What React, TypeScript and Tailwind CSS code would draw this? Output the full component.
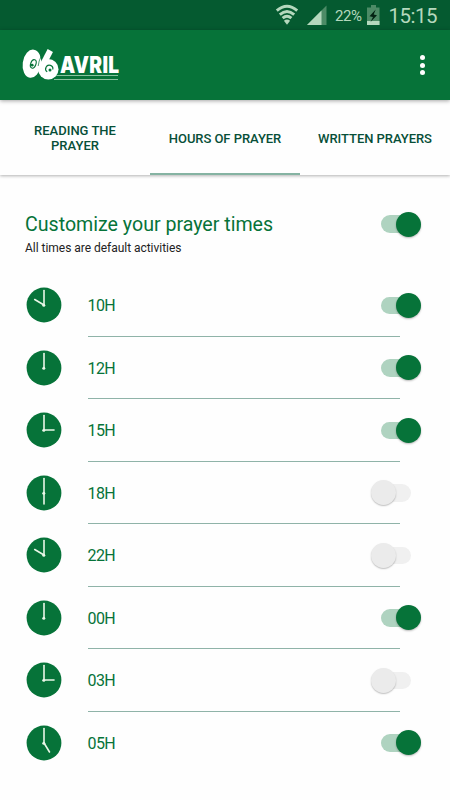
import React from "react";

type Prayer = { label: string; on: boolean; hand: [number, number] | null };

const prayers: Prayer[] = [
  { label: "10H", on: true, hand: [8.7, 12.5] },
  { label: "12H", on: true, hand: null },
  { label: "15H", on: true, hand: [28, 18] },
  { label: "18H", on: false, hand: [18, 29] },
  { label: "22H", on: false, hand: [8.7, 12.5] },
  { label: "00H", on: true, hand: null },
  { label: "03H", on: false, hand: [28, 18] },
  { label: "05H", on: true, hand: [23.5, 27] },
];

function Clock({ hand }: { hand: Prayer["hand"] }) {
  return (
    <svg className="size-9 shrink-0" viewBox="0 0 36 36">
      <circle cx="18" cy="18" r="17.4" fill="#067339" />
      <g stroke="#e9f7e8" strokeWidth="1.6" strokeLinecap="round">
        <line x1="18" y1="18" x2="18" y2="3.5" />
        {hand && <line x1="18" y1="18" x2={hand[0]} y2={hand[1]} />}
      </g>
      <circle cx="17.8" cy="18.2" r="1.5" fill="#e9f7e8" />
    </svg>
  );
}

function Toggle({ on }: { on: boolean }) {
  return on ? (
    <button className="flex h-[25px] w-[51px] items-center pl-[11px]" aria-pressed="true">
      <span className="h-[17.5px] w-[30px] shrink-0 rounded-full bg-[#afd3c0]" />
      <span className="-ml-[15.5px] size-[25px] shrink-0 rounded-full bg-[#067339] shadow-[0_1px_2px_rgba(0,0,0,0.28)]" />
    </button>
  ) : (
    <button className="flex h-[25px] w-[51px] items-center pl-[0.5px]" aria-pressed="false">
      <span className="z-1 size-[25px] shrink-0 rounded-full bg-[#ebebeb] shadow-[0_1px_1.5px_rgba(0,0,0,0.25)]" />
      <span className="-ml-[14.5px] h-[17.5px] w-[30px] shrink-0 rounded-full bg-[#f0f0f0]" />
    </button>
  );
}

function Logo() {
  return (
    <div className="flex items-center">
      <svg className="h-12 w-[40px] shrink-0 overflow-visible" viewBox="20 41 40 48">
        <g fill="#fff">
          <ellipse cx="31.9" cy="63.7" rx="9.2" ry="14.2" transform="rotate(8 31.9 63.7)" />
          <circle cx="48.3" cy="69.2" r="10.2" />
          <line x1="42.8" y1="65" x2="50.3" y2="50.5" stroke="#fff" strokeWidth="6" />
        </g>
        <path d="M41.3 56Q38.6 61 38.2 66" fill="none" stroke="#067339" strokeWidth="0.7" />
        <ellipse cx="33.3" cy="63.9" rx="2.6" ry="4.4" transform="rotate(20 33.3 63.9)" fill="none" stroke="#067339" strokeWidth="1.1" />
        <circle cx="32.2" cy="65.2" r="1.4" fill="#067339" />
        <path d="M47.2 71.8A3.6 3.6 0 1 1 52.8 69.5" fill="none" stroke="#067339" strokeWidth="1.2" />
        <circle cx="50" cy="70" r="1.5" fill="#067339" />
        <path d="M56 75.5H118M54 79.5H118" stroke="#8ac29f" strokeWidth="1" />
      </svg>
      <span className="w-[64px] origin-left scale-x-[0.853] whitespace-nowrap font-[Inter,sans-serif] text-[22.5px] font-black leading-7 tracking-[0.3px] text-white">
        AVRIL
      </span>
    </div>
  );
}

function StatusBar() {
  return (
    <div className="flex h-[30px] items-center justify-end bg-[#055a30] pr-[12px] text-[#b5d8bd]">
      <svg className="h-[30px] w-[54px]" viewBox="274 0 54 30">
        <g fill="none" stroke="#b5d8bd" strokeWidth="2.9">
          <path d="M276.8 10.7Q287 1.8 297.2 10.7" />
          <path d="M279.8 14.6Q287 8.3 294.2 14.6" />
          <path d="M282.6 18.2Q287 14.3 291.4 18.2" />
        </g>
        <path d="M283.9 20.8Q287 18.3 290.1 20.8L287 24.8Z" fill="#b5d8bd" />
        <path d="M307 25L326.5 5.5V25Z" fill="#4d8b66" />
        <path d="M307 25L321.5 10.5V25Z" fill="#b5d8bd" />
      </svg>
      <span className="ml-[7px] w-[29px] whitespace-nowrap pt-[3px] text-[15px] tracking-[-0.4px]">22%</span>
      <svg className="ml-[3px] h-[30px] w-[13px]" viewBox="367 0 13 30">
        <path d="M371 5h5v2.5h3.5V25H367V7.5h4Z" fill="#4d8b66" />
        <path d="M367 21h12.5v4H367Z" fill="#b5d8bd" />
        <path d="M375.7 9.5L369.5 16.3L373 17L370.5 22L377 15.2L373.7 14.4Z" fill="#032313" />
      </svg>
      <span className="ml-[8.5px] w-[49.5px] whitespace-nowrap pt-[2px] text-[20.5px] tracking-[-0.5px]">15:15</span>
    </div>
  );
}

export default function App() {
  return (
    <div className="h-[800px] w-[450px] overflow-hidden bg-[#fefefe] font-[Roboto,sans-serif]">
      <StatusBar />
      <header className="relative z-20 flex h-[70px] items-center justify-between bg-[#067339] pl-5 pr-[25px] shadow-[0_1px_4px_rgba(0,0,0,0.35)]">
        <Logo />
        <button className="flex flex-col gap-[2.5px]" aria-label="More">
          <span className="size-[5px] rounded-full bg-white" />
          <span className="size-[5px] rounded-full bg-white" />
          <span className="size-[5px] rounded-full bg-white" />
        </button>
      </header>
      <nav className="relative z-10 grid h-[75px] grid-cols-3 bg-[#fefefe] text-center text-[13px] font-medium leading-[15px] text-[#074f38] shadow-[0_1px_3px_rgba(0,0,0,0.3)]">
        <button className="flex items-center justify-center px-6 pt-[1px]">READING THE PRAYER</button>
        <button className="flex items-center justify-center whitespace-nowrap border-b-[2.5px] border-[#85b3a2] pt-[4px] tracking-[-0.05px]">
          HOURS OF PRAYER
        </button>
        <button className="flex items-center justify-center whitespace-nowrap pt-[1px] tracking-[-0.05px]">WRITTEN PRAYERS</button>
      </nav>
      <main className="pt-9">
        <section className="flex h-[63px] justify-between pl-[25px] pr-[29px]">
          <div>
            <h1 className="whitespace-nowrap text-[19.6px] leading-7 text-[#067339]">Customize your prayer times</h1>
            <p className="text-[12px] leading-[18px] tracking-[-0.03px] text-[#222]">All times are default activities</p>
          </div>
          <div className="pt-[0.5px]">
            <Toggle on />
          </div>
        </section>
        <ul>
          {prayers.map((p, i) => (
            <li key={p.label} className="flex h-[62.5px] pl-[26px] pr-[29px]">
              <div className="flex items-center">
                <Clock hand={p.hand} />
              </div>
              <div
                className={
                  "ml-[25.5px] flex w-[312.5px] items-center pt-[2.5px] text-[16px] tracking-[-0.6px] text-[#067339] " +
                  (i < prayers.length - 1 ? "border-b border-[#8fb3a8]" : "")
                }
              >
                {p.label}
              </div>
              <div className="-ml-[30px] flex items-center">
                <Toggle on={p.on} />
              </div>
            </li>
          ))}
        </ul>
      </main>
    </div>
  );
}
